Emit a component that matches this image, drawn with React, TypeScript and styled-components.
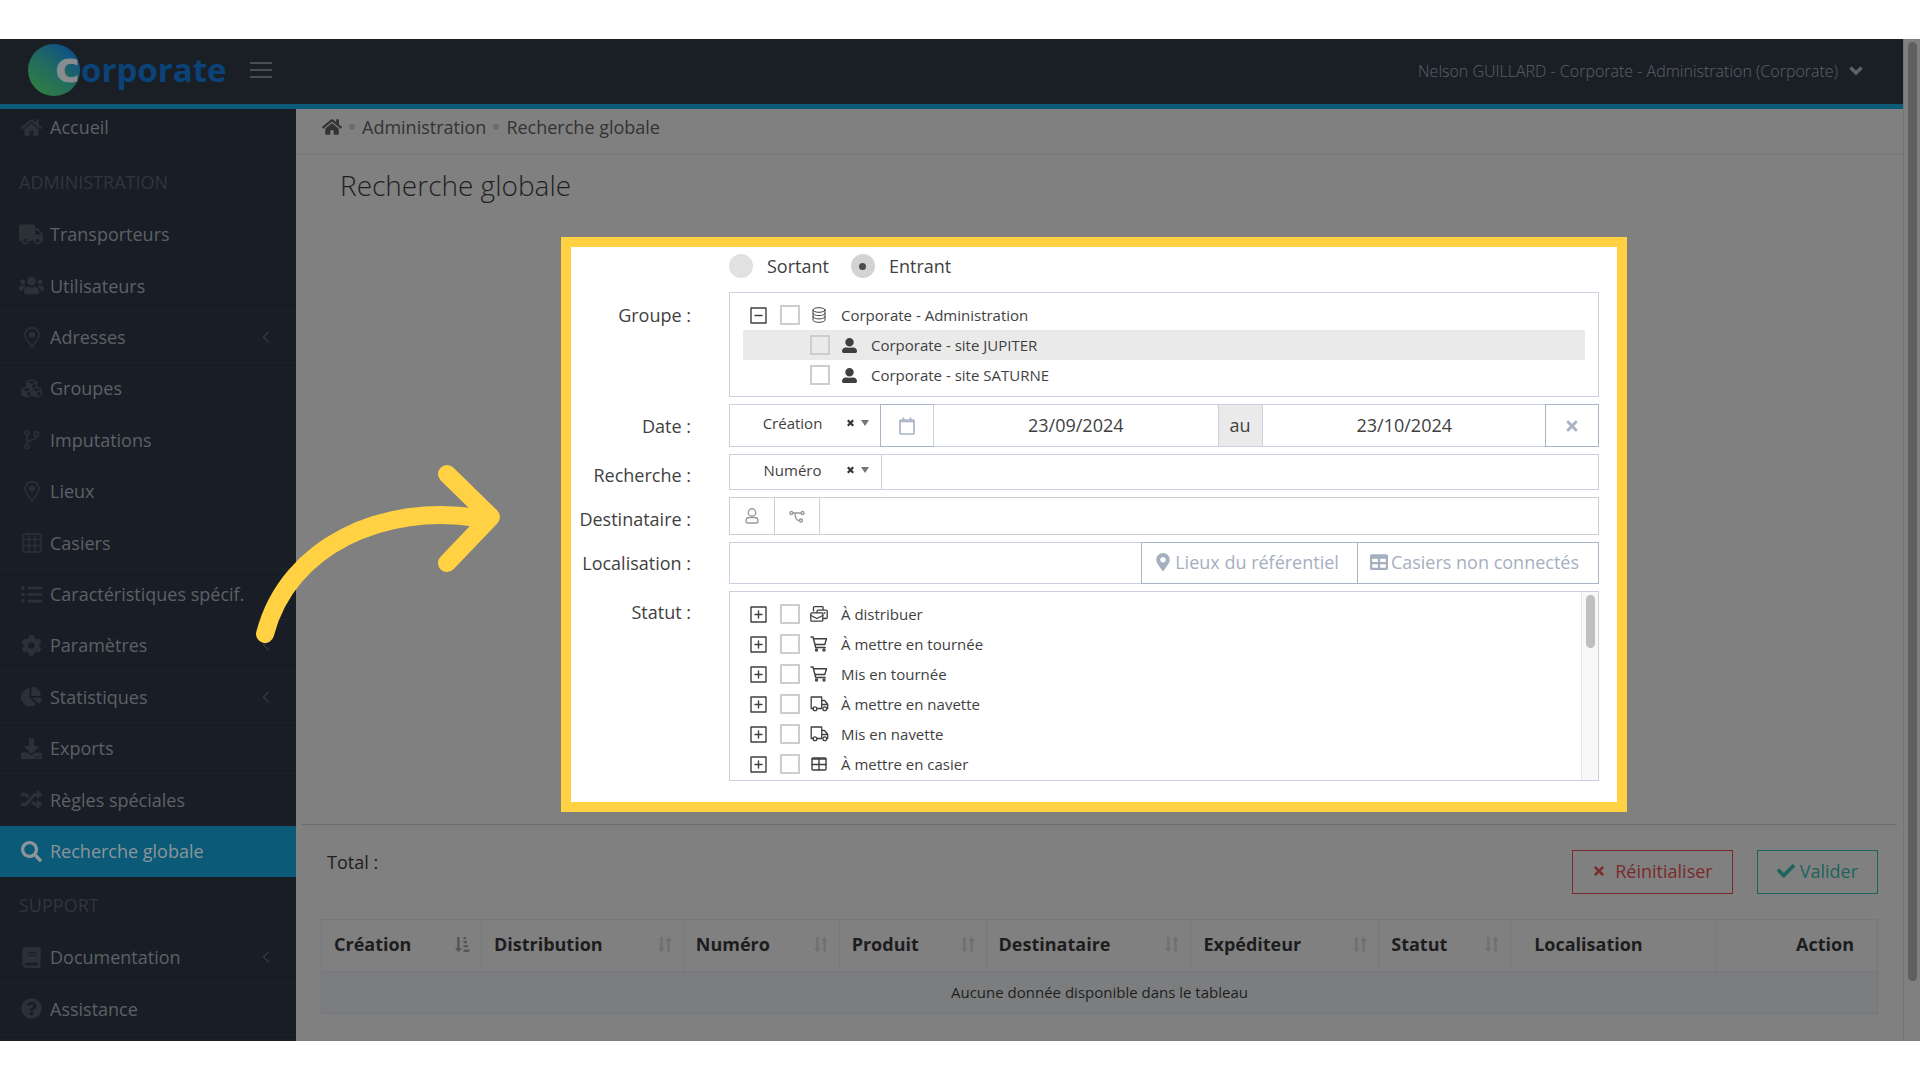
import React from "react";
import styled, { createGlobalStyle, css } from "styled-components";
import {
  FaHome, FaTruck, FaUsers, FaCubes, FaListUl, FaCog, FaChartPie, FaDownload, FaRandom, FaSearch,
  FaBook, FaQuestionCircle, FaTimes, FaCheck, FaMapMarkerAlt, FaTable, FaUserAlt,
} from "react-icons/fa";

const line = "#c9d0de";
const strong = "#a9b4c6";
const grey = "#cfcfcf";

const Global = createGlobalStyle`
  *, *::before, *::after { box-sizing: border-box; }
  body { margin: 0; background: #fff; color: #1d1d1d; font: 18px/24px "Open Sans", "Noto Sans", sans-serif; }
  button, input, select { font: inherit; color: inherit; margin: 0; border-radius: 0; }
  a { color: inherit; text-decoration: none; }
  ul { list-style: none; margin: 0; padding: 0; }
`;

const Page = styled.div`height: 100vh; min-height: 960px; padding: 39px 0; display: flex;`;
const Shell = styled.div`position: relative; flex: 1; display: flex; background: #808080; overflow: hidden;`;
const Frame = styled.div`flex: 1; min-width: 0; display: flex; flex-direction: column;`;

const TopBar = styled.header`
  height: 70px; flex: none; display: flex; align-items: center; padding: 0 40px 3px 28px;
  background: #1a1f26; border-bottom: 5px solid #0b5a78;
`;
const Logo = styled.a`display: flex; align-items: center; margin-right: 18px;`;
const Burger = styled.button`
  width: 22px; height: 16px; padding: 0; border: 0; background: none; display: flex; flex-direction: column; justify-content: space-between;
  i { height: 2px; background: #474c53; }
`;
const Account = styled.button`
  margin-left: auto; padding: 2px 0 0; border: 0; background: none; display: flex; align-items: center; gap: 11px;
  color: #5c6167; font-size: 16px; font-weight: 300;
`;

const Body = styled.div`flex: 1; min-height: 0; display: flex;`;
const Sidebar = styled.nav`width: 296px; flex: none; background: #191d25; display: flex; flex-direction: column; padding-bottom: 6px;`;
const Section = styled.h3`
  margin: 0; height: 55px; padding-left: 19px; display: flex; align-items: center; font: inherit; color: #31363d;
`;
const NavItem = styled.a<{ $active?: boolean; $first?: boolean }>`
  flex: ${p => (p.$first ? "0 0 45px" : "1 1 0")}; padding: 0 26px 0 18px; display: flex; align-items: center; gap: 4px;
  color: #5d6167; border-bottom: 1px solid #1d222a;
  ${p => p.$first && css`border-bottom: 0; padding-bottom: 9px;`}
  ${p => p.$active && css`background: #0b5a78; color: #8d959a; border-color: #0b5a78;`}
`;
const NavIcon = styled.span<{ $active?: boolean }>`
  width: 28px; display: flex; justify-content: center; color: ${p => (p.$active ? "#8d959a" : "#2c3138")}; font-size: 21px; padding-right: 1px;
`;
const Arrow = styled.span`margin-left: auto; color: #34393f; display: flex;`;

const Main = styled.main`flex: 1; min-width: 0; display: flex; flex-direction: column;`;
const Crumbs = styled.div`
  height: 46px; flex: none; padding: 0 26px 9px; display: flex; align-items: center; gap: 7px; border-bottom: 1px solid #767676; color: #333;
`;
const Dot = styled.i`width: 6px; height: 6px; border-radius: 3px; background: #6c6c6c;`;
const Title = styled.h1`margin: 0; flex: 1; padding: 10px 44px; font-size: 28px; line-height: 40px; font-weight: 300; color: #1f1f1f;`;
const Results = styled.section`margin: 0 6px; border-top: 1px solid #6c6c6c; padding: 25px 19px 27px;`;
const Actions = styled.div`display: flex; align-items: flex-start; gap: 24px; margin-bottom: 25px;`;
const Total = styled.span`margin-right: auto; padding-left: 6px;`;
const ActionButton = styled.button<{ $color: string; $gap: number }>`
  height: 44px; padding: 0 19px 2px; display: flex; align-items: center; gap: ${p => p.$gap}px;
  background: none; border: 1px solid ${p => p.$color}; color: ${p => p.$color};
`;
const Table = styled.table`
  width: 100%; table-layout: fixed; border-collapse: collapse;
  th, td { border: 1px solid #75787c; }
  th { height: 52px; padding: 0 11px 3px 12px; text-align: left; }
  td { height: 42px; padding: 0 0 2px; text-align: center; font-size: 15px; background: #7c7d7f; }
`;
const Head = styled.div<{ $place?: string }>`
  display: flex; align-items: center; justify-content: ${p => p.$place || "space-between"};
  ${p => p.$place && css`padding: 0 12px 0 11px;`}
`;

const Track = styled.div`width: 17px; flex: none; border-left: 1px solid #747474; padding: 3px 3px 0 4px;`;
const Thumb = styled.div`height: 94%; border-radius: 5px; background: #5f5f5f;`;

const Spotlight = styled.form`
  position: absolute; left: 561px; right: 293px; top: 198px; height: 575px; border: 10px solid #ffd143; background: #fff;
  padding: 7px 18px 0 0; color: #3f3f3f; display: flex; flex-direction: column; gap: 7px;
`;
const Field = styled.div<{ $top: number }>`
  display: grid; grid-template-columns: 120px 1fr; column-gap: 38px; align-items: start;
  > label, > span { text-align: right; padding-top: ${p => p.$top}px; }
`;
const Radios = styled.div`display: flex; padding-left: 158px; height: 31px; gap: 22px; align-items: flex-start;
  label { display: flex; align-items: center; gap: 14px; height: 24px; }
`;
const Radio = styled.input`
  appearance: none; width: 24px; height: 24px; margin: 0; border-radius: 12px; background: #e1e1e1; display: grid; place-items: center;
  &:checked { background: #d3d3d3; }
  &:checked::after { content: ""; width: 7px; height: 7px; border-radius: 4px; background: #4a4a4a; }
`;
const Tree = styled.div<{ $h: number }>`border: 1px solid ${line}; height: ${p => p.$h}px; display: flex; overflow: hidden;`;
const TreeList = styled.ul`flex: 1; padding: 7px 13px;`;
const Node = styled.li<{ $level?: boolean; $hover?: boolean }>`
  height: 30px; padding-left: ${p => (p.$level ? 67 : 7)}px; display: flex; align-items: center; font-size: 15px;
  background: ${p => (p.$hover ? "#eaeaea" : "none")};
  label { display: flex; align-items: center; height: 30px; }
`;
const Toggle = styled.button`width: 17px; height: 17px; padding: 0; margin-right: 13px; border: 0; background: none; display: flex;`;
const Check = styled.input`appearance: none; width: 20px; height: 20px; border: 2px solid #cdcdcd; margin: 0;`;
const NodeIcon = styled.span`width: 20px; margin: 0 12px 0 9px; display: flex; justify-content: center;`;
const InnerTrack = styled.div`width: 17px; border-left: 1px solid #e6e6e6; background: #f8f8f8; padding: 3px 3px 0 4px;`;
const InnerThumb = styled.div`height: 53px; border-radius: 5px; background: #bfbfbf;`;

const Group = styled.div<{ $h: number; $grey?: boolean }>`
  display: flex; height: ${p => p.$h}px; border: 1px solid ${p => (p.$grey ? grey : line)};
  && > * + * { border-left: 1px solid ${p => (p.$grey ? grey : line)}; }
`;
const Picker = styled.div`
  width: 151px; flex: none; display: flex; align-items: center; padding: 0 12px 5px 18px; font-size: 15px;
  select { appearance: none; border: 0; background: none; padding: 0; flex: 1; min-width: 0; text-align: center; text-align-last: center; outline: 0; }
`;
const Clear = styled.button`border: 0; background: none; padding: 0; width: 22px; display: flex; justify-content: center; margin-left: 2px;`;
const TextBox = styled.input`flex: 1; min-width: 0; border: 0; padding: 0 0 1px; background: none; text-align: center; outline: 0;`;
const outlined = css`
  &&& { border: 1px solid ${strong}; margin: -1px; }
`;
const IconButton = styled.button<{ $w: number; $grey?: boolean }>`
  width: ${p => p.$w}px; flex: none; padding: 0; border: 0; background: #fff; display: grid; place-items: center; color: ${p => (p.$grey ? "#9b9b9b" : strong)};
  ${p => !p.$grey && outlined}
`;
const Addon = styled.span`width: 44px; padding-bottom: 2px; background: #eaeaea; display: grid; place-items: center;`;
const LinkButton = styled.button`
  flex: none; background: #fff; padding: 0 19px 3px 12px; display: flex; align-items: center; gap: 3px; color: #a5afbf;
  ${outlined}
`;
const Pointer = styled.svg`position: absolute; left: 250px; top: 421px; pointer-events: none;`;

const Svg = ({ w = 18, h = w, vb = "0 0 18 18", sw = 1.4, children }: any) => (
  <svg width={w} height={h} viewBox={vb} fill="none" stroke="currentColor" strokeWidth={sw} strokeLinecap="round" strokeLinejoin="round" aria-hidden>{children}</svg>
);
const Pin = () => <Svg w={16} h={21} vb="0 0 16 21" sw={1.5}><path d="M8 20C5 15.500 1 11.500 1 7.800a7 7 0 0 1 14 0C15 11.500 11 15.500 8 20z" /><circle cx="8" cy="7.800" r="2.300" fill="currentColor" /></Svg>;
const Branch = () => <Svg w={16} h={21} vb="0 0 16 21" sw={1.5}><circle cx="3" cy="3.500" r="2" /><circle cx="3" cy="17.500" r="2" /><circle cx="12.500" cy="5" r="2.200" /><path d="M3 6v9M12.500 7.500c0 4-8 3-9.500 6" /></Svg>;
const Grid = () => <Svg w={20} vb="0 0 20 20" sw={1.4}><rect x="1" y="1" width="18" height="18" rx="2" /><path d="M1 6.500h18M1 12.500h18M7 1v18M13 1v18" /></Svg>;
const Chevron = () => <Svg w={8} h={12} vb="0 0 8 12" sw={1.4}><path d="M6.500 1 1.500 6l5 5" /></Svg>;
const ChevronDown = () => <svg width="14" height="10" viewBox="0 0 14 10" fill="none" stroke="currentColor" strokeWidth="3.500" aria-hidden><path d="m1.500 1.500 5.500 5.500 5.500-5.500" /></svg>;
const Box = ({ open }: { open?: boolean }) => <Svg w={17} vb="0 0 17 17" sw={1.4}><path d={"M1 1h15v15H1zM5 8.500h7" + (open ? "" : "M8.500 5v7")} /></Svg>;
const Database = () => <Svg w={14} h={16} vb="0 0 14 16" sw={1}><ellipse cx="7" cy="3" rx="6" ry="2.300" /><path d="M1 3v10c0 1.300 2.700 2.300 6 2.300s6-1 6-2.300V3M1 6.300c0 1.300 2.700 2.300 6 2.300s6-1 6-2.300M1 9.600c0 1.300 2.700 2.300 6 2.300s6-1 6-2.300" /></Svg>;
const Cart = () => <Svg w={18} h={16} vb="0 0 18 16"><path d="M1 1h2l2.700 10.500h9.500M4 2.800h12.500l-1.700 5.700H5.500" /><circle cx="6.500" cy="14" r="1" /><circle cx="14" cy="14" r="1" /></Svg>;
const Truck = () => <Svg w={19} h={16} vb="0 0 19 16" sw={1.3}><path d="M3 12.500H1.200V1h10.500v11.500H7.200M11.700 4.500h2.800l3.200 3.700v4.300h-.5M11.700 8.500h5.800" /><circle cx="5" cy="12.800" r="1.900" /><circle cx="14.800" cy="12.800" r="1.900" /></Svg>;
const Mail = () => <Svg w={18} h={16} vb="0 0 18 16" sw={1.3}><path d="M3.500 5V1.500c0-.5.300-.8.800-.8h8c.5 0 .8.300.8.800V4M7 6.500V5.200c0-.6.400-1 1-1h8.200c.6 0 1 .4 1 1v6.300c0 .6-.4 1-1 1h-2.700M14 7h1" /><rect x=".8" y="6.800" width="12" height="8.400" rx="1" /><path d="m1 9.500 5.800 3 6-3" /></Svg>;
const Locker = () => <Svg w={16} h={14} vb="0 0 16 14"><rect x="1" y="1" width="14" height="12" rx="1" /><path d="M1 2h14M1 7.500h14M8 2v11" /></Svg>;
const Calendar = () => <Svg w={16} h={18} vb="0 0 16 18" sw={1.7}><rect x="1" y="3" width="14" height="14" rx="1" /><path d="M1 4.500h14M4.500 1v2M11.500 1v2" /></Svg>;
const Person = () => <Svg w={14} h={16} vb="0 0 14 16" sw={1.4}><circle cx="7" cy="4.500" r="3.700" /><path d="M4.500 9.500h5c2 0 3.500 1.500 3.500 3.500 0 1.300-.6 2-1.500 2h-9C1.600 15 1 14.300 1 13c0-2 1.500-3.500 3.500-3.500z" /></Svg>;
const Nodes = () => <Svg w={16} h={13} vb="0 0 16 13" sw={1.4}><circle cx="2.300" cy="3" r="1.500" /><circle cx="13.500" cy="3" r="1.500" /><circle cx="12" cy="10.500" r="1.500" /><path d="M4 3h8M6 3c0 4 1 7.500 4.500 7.500" /></Svg>;
const Caret = () => <svg width="8" height="6" viewBox="0 0 8 6" aria-hidden><path d="M0 0h8L4 6z" fill="#777" /></svg>;
const ClearMark = () => <svg width="7" height="8" viewBox="0 0 7 8" stroke="#333" strokeWidth="2.200" aria-hidden><path d="m.8 1.300 5.400 5.400M6.200 1.300.8 6.700" /></svg>;
const Sort = () => <svg width="14" height="17" viewBox="0 0 14 17" fill="#707070" aria-hidden><path d="M2.200 1h2.400v11h2.200l-3.400 4.500L0 12h2.200zM9.400 16h2.400V5H14l-3.400-4.500L7.200 5h2.200z" /></svg>;
const SortActive = () => <svg width="15" height="17" viewBox="0 0 15 17" fill="#565656" aria-hidden><path d="M2.200 1h2.400v11h2.200l-3.400 4.500L0 12h2.200zM8.500 1h2.500v2.200H8.500zM8.500 5h3.500v2.200H8.500zM8.500 9h4.500v2.200H8.500zM8.500 13.500h6v2.500h-6z" /></svg>;

const menu: [string, React.ReactNode, boolean?][] = [
  ["Transporteurs", <FaTruck size={25} />],
  ["Utilisateurs", <FaUsers size={25} />],
  ["Adresses", <Pin />, true],
  ["Groupes", <FaCubes />],
  ["Imputations", <Branch />],
  ["Lieux", <Pin />],
  ["Casiers", <Grid />],
  ["Caractéristiques spécif.", <FaListUl />],
  ["Paramètres", <FaCog />, true],
  ["Statistiques", <FaChartPie />, true],
  ["Exports", <FaDownload />],
  ["Règles spéciales", <FaRandom />],
];
const support: [string, React.ReactNode, boolean?][] = [
  ["Documentation", <FaBook />, true],
  ["Assistance", <FaQuestionCircle />],
];
const statuses: [string, React.ReactNode][] = [
  ["À distribuer", <Mail />], ["À mettre en tournée", <Cart />], ["Mis en tournée", <Cart />],
  ["À mettre en navette", <Truck />], ["Mis en navette", <Truck />], ["À mettre en casier", <Locker />],
];
const columns: [string, number][] = [
  ["Création", 160], ["Distribution", 202], ["Numéro", 156], ["Produit", 147], ["Destinataire", 205],
  ["Expéditeur", 188], ["Statut", 132], ["Localisation", 205], ["Action", 162],
];

const Item = ({ label, icon, sub, ...rest }: any) => (
  <NavItem href="#" {...rest}>
    <NavIcon $active={rest.$active}>{icon}</NavIcon>{label}{sub && <Arrow><Chevron /></Arrow>}
  </NavItem>
);

export default function App() {
  return (
    <Page>
      <Global />
      <Shell>
        <Frame>
          <TopBar>
            <Logo href="#" aria-label="Corporate">
              <svg width="204" height="64" viewBox="0 -6 204 64" aria-hidden>
                <defs>
                  <linearGradient id="disc" x1="0.2" y1="0.9" x2="0.8" y2="0.1">
                    <stop offset="0" stopColor="#2f7b45" /><stop offset=".5" stopColor="#226a60" /><stop offset="1" stopColor="#0e5286" />
                  </linearGradient>
                </defs>
                <circle cx="26" cy="26" r="26" fill="url(#disc)" />
                <text x="27" y="38" fontFamily="DejaVu Sans" fontWeight="700" fontSize="42" fill="#8a8d90">c</text>
                <text x="53" y="38" fontFamily="Open Sans" fontWeight="700" fontSize="33" fill="#0b4379">orporate</text>
              </svg>
            </Logo>
            <Burger type="button" aria-label="Menu"><i /><i /><i /></Burger>
            <Account type="button">Nelson GUILLARD - Corporate - Administration (Corporate) <ChevronDown /></Account>
          </TopBar>
          <Body>
            <Sidebar>
              <Item label="Accueil" icon={<FaHome />} $first />
              <Section>ADMINISTRATION</Section>
              {menu.map(([l, i, s]) => <Item key={l} label={l} icon={i} sub={s} />)}
              <Item label="Recherche globale" icon={<FaSearch />} $active />
              <Section>SUPPORT</Section>
              {support.map(([l, i, s]) => <Item key={l} label={l} icon={i} sub={s} />)}
            </Sidebar>
            <Main>
              <Crumbs>
                <FaHome size={20} /><Dot /><a href="#">Administration</a><Dot /><span>Recherche globale</span>
              </Crumbs>
              <Title>Recherche globale</Title>
              <Results>
                <Actions>
                  <Total>Total :</Total>
                  <ActionButton type="button" $color="#7a2a2c" $gap={9}><FaTimes size={14} />Réinitialiser</ActionButton>
                  <ActionButton type="button" $color="#1c645d" $gap={5}><FaCheck size={18} />Valider</ActionButton>
                </Actions>
                <Table>
                  <colgroup>{columns.map(([n, w]) => <col key={n} style={{ width: `${(w / 1557) * 100}%` }} />)}</colgroup>
                  <thead>
                    <tr>
                      {columns.map(([n], i) => (
                        <th key={n}>
                          <Head $place={i === 7 ? "flex-start" : i === 8 ? "flex-end" : undefined}>
                            {n}{i === 0 ? <SortActive /> : i < 7 && <Sort />}
                          </Head>
                        </th>
                      ))}
                    </tr>
                  </thead>
                  <tbody><tr><td colSpan={9}>Aucune donnée disponible dans le tableau</td></tr></tbody>
                </Table>
              </Results>
            </Main>
          </Body>
        </Frame>
        <Track><Thumb /></Track>

        <Spotlight>
          <Radios>
            <label><Radio type="radio" name="sens" />Sortant</label>
            <label><Radio type="radio" name="sens" defaultChecked />Entrant</label>
          </Radios>
          <Field $top={11}>
            <span>Groupe :</span>
            <Tree $h={105}>
              <TreeList>
                <Node>
                  <Toggle type="button" aria-label="Réduire"><Box open /></Toggle>
                  <label><Check type="checkbox" /><NodeIcon><Database /></NodeIcon>Corporate - Administration</label>
                </Node>
                {["JUPITER", "SATURNE"].map(s => (
                  <Node key={s} $level $hover={s === "JUPITER"}>
                    <label><Check type="checkbox" /><NodeIcon><FaUserAlt size={15} /></NodeIcon>Corporate - site {s}</label>
                  </Node>
                ))}
              </TreeList>
            </Tree>
          </Field>
          <Field $top={10}>
            <label htmlFor="date">Date :</label>
            <Group $h={43}>
              <Picker>
                <select id="date"><option>Création</option></select>
                <Clear type="button" aria-label="Effacer"><ClearMark /></Clear><Caret />
              </Picker>
              <IconButton type="button" $w={54} aria-label="Calendrier"><Calendar /></IconButton>
              <TextBox aria-label="Du" defaultValue="23/09/2024" />
              <Addon>au</Addon>
              <TextBox aria-label="Au" defaultValue="23/10/2024" />
              <IconButton type="button" $w={54} aria-label="Effacer les dates"><FaTimes size={16} /></IconButton>
            </Group>
          </Field>
          <Field $top={9}>
            <label htmlFor="search">Recherche :</label>
            <Group $h={36}>
              <Picker>
                <select aria-label="Critère"><option>Numéro</option></select>
                <Clear type="button" aria-label="Effacer"><ClearMark /></Clear><Caret />
              </Picker>
              <TextBox id="search" />
            </Group>
          </Field>
          <Field $top={10}>
            <label htmlFor="dest">Destinataire :</label>
            <Group $h={38} $grey>
              <IconButton type="button" $w={44} $grey aria-label="Personne"><Person /></IconButton>
              <IconButton type="button" $w={45} $grey aria-label="Organisation"><Nodes /></IconButton>
              <TextBox id="dest" />
            </Group>
          </Field>
          <Field $top={9}>
            <label htmlFor="loc">Localisation :</label>
            <Group $h={42}>
              <TextBox id="loc" />
              <LinkButton type="button"><FaMapMarkerAlt size={18} />Lieux du référentiel</LinkButton>
              <LinkButton type="button"><FaTable size={18} />Casiers non connectés</LinkButton>
            </Group>
          </Field>
          <Field $top={9}>
            <span>Statut :</span>
            <Tree $h={190}>
              <TreeList>
                {statuses.map(([l, i]) => (
                  <Node key={l}>
                    <Toggle type="button" aria-label="Déplier"><Box /></Toggle>
                    <label><Check type="checkbox" /><NodeIcon>{i}</NodeIcon>{l}</label>
                  </Node>
                ))}
              </TreeList>
              <InnerTrack><InnerThumb /></InnerTrack>
            </Tree>
          </Field>
        </Spotlight>

        <Pointer width="260" height="190" viewBox="250 460 260 190" fill="none" stroke="#ffd143" strokeWidth="18" strokeLinecap="round" strokeLinejoin="round" aria-hidden>
          <path d="M265 634C288 545 385 503 478 518" />
          <path d="M447 474 491 517 447 563" />
        </Pointer>
      </Shell>
    </Page>
  );
}
